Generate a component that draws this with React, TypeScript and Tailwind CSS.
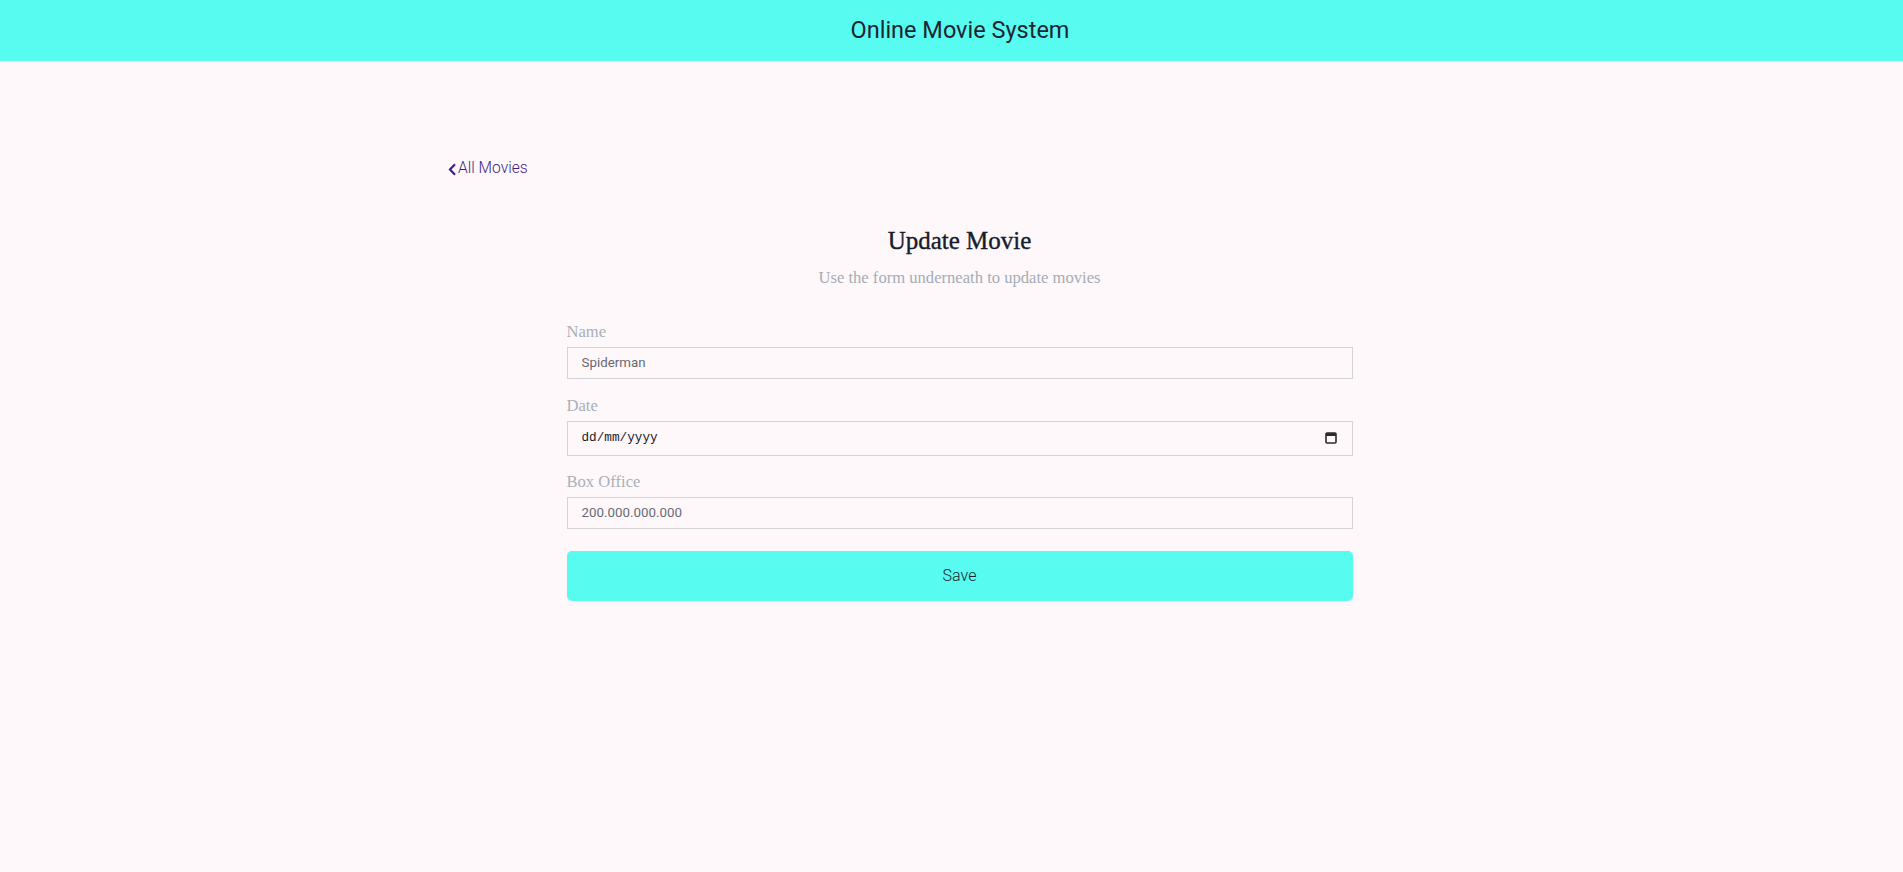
const fields = [
  { label: "Name", kind: "text", value: "Spiderman", mb: "mb-[15px]" },
  { label: "Date", kind: "date", value: "", mb: "mb-[14px]" },
  { label: "Box Office", kind: "text", value: "200.000.000.000", mb: "mb-[22px]" },
];

const CalendarIcon = () => (
  <svg width="12" height="12" viewBox="0 0 12 12" fill="none" className="shrink-0">
    <rect x="1" y="1" width="10" height="10" rx="1" stroke="#2b2b2b" strokeWidth="1.6" />
    <rect x="1" y="1" width="10" height="3" fill="#2b2b2b" />
  </svg>
);

const App = () => {
  return (
    <div className="min-h-screen bg-[#fef8fa] font-['Roboto',sans-serif]">
      <header className="flex h-[61px] items-center justify-center bg-[#57fbf0] pl-[17px]">
        <h1 className="text-[23.5px] font-normal text-[#1f2433]">
          Online Movie System
        </h1>
      </header>

      <main className="pl-[17px]">
        <div className="mx-auto max-w-[1024px] pt-[96px]">
          <a
            href="#"
            className="inline-flex h-[24px] items-center text-[15.6px] font-light text-[#3d1f8c]"
          >
            <svg
              width="9"
              height="13"
              viewBox="0 0 9 13"
              fill="none"
              stroke="currentColor"
              strokeWidth="2.2"
              className="mr-px"
            >
              <path d="M7 1.2 2 6.5l5 5.3" />
            </svg>
            All Movies
          </a>

          <section className="mx-auto mt-[43px] w-[787px] pr-px font-['Liberation_Serif',serif]">
            <h2 className="text-center text-[25px] leading-[30px] text-[#171b2d] [-webkit-text-stroke:0.35px_#171b2d]">
              Update Movie
            </h2>
            <p className="mt-[10px] text-center text-[16.6px] leading-[24px] text-[#a5acb5]">
              Use the form underneath to update movies
            </p>

            <form className="mt-[30px]" onSubmit={(e) => e.preventDefault()}>
              {fields.map((f) => (
                <div key={f.label} className={f.mb}>
                  <label className="mb-[3px] block text-[16.6px] leading-[24px] text-[#a9b0b9]">
                    {f.label}
                  </label>
                  {f.kind === "date" ? (
                    <div className="flex h-[35px] w-full items-center border border-[#d3d4d8] pl-[14px] pr-[15px]">
                      <input
                        type="text"
                        placeholder="dd/mm/yyyy"
                        className="min-w-0 flex-1 bg-transparent font-['Liberation_Mono',monospace] text-[12.7px] text-[#1a1a2e] outline-none placeholder:text-[#1a1a2e]"
                      />
                      <CalendarIcon />
                    </div>
                  ) : (
                    <input
                      type="text"
                      defaultValue={f.value}
                      className="block h-[32px] w-full border border-[#d3d4d8] bg-transparent pl-[14px] font-['Roboto',sans-serif] text-[13.33px] text-[#676a72] outline-none"
                    />
                  )}
                </div>
              ))}

              <button
                type="submit"
                className="h-[50px] w-full rounded-[5px] bg-[#57fbf0] font-['Roboto',sans-serif] text-[16px] font-light text-[#1f2433]"
              >
                Save
              </button>
            </form>
          </section>
        </div>
      </main>
    </div>
  );
};

export default App;
